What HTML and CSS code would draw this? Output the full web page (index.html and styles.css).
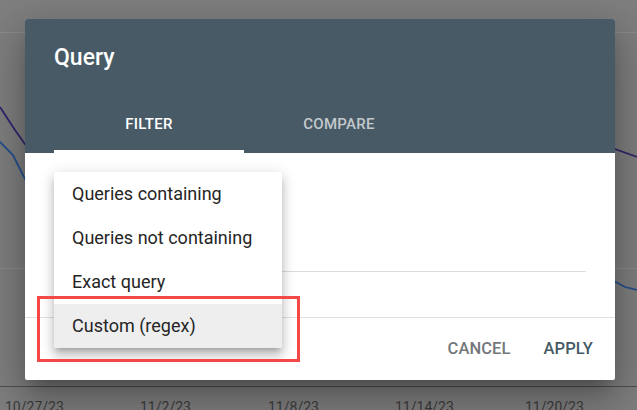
FILE: index.html
```html
<!DOCTYPE html>
<html lang="en">
<head>
<meta charset="utf-8">
<title>Query filter</title>
<link rel="stylesheet" href="styles.css">
</head>
<body>
<div class="page">
  <svg class="chart" width="637" height="410" viewBox="0 0 637 410" aria-hidden="true">
    <line x1="0" y1="32.5" x2="637" y2="32.5" class="grid"/>
    <line x1="0" y1="268.5" x2="637" y2="268.5" class="grid"/>
    <line x1="0" y1="386.5" x2="637" y2="386.5" class="axis"/>
    <polyline points="0,107 15,130 27,147" class="series-purple"/>
    <polyline points="0,142 13,155 27,183" class="series-blue"/>
    <polyline points="612,148 637,157" class="series-purple"/>
    <polyline points="612,280 625,287 637,290" class="series-blue"/>
    <text x="5" y="412" class="tick">10/27/23</text>
    <text x="140" y="412" class="tick">11/2/23</text>
    <text x="268" y="412" class="tick">11/8/23</text>
    <text x="395" y="412" class="tick">11/14/23</text>
    <text x="525" y="412" class="tick">11/20/23</text>
  </svg>

  <div class="dialog" role="dialog" aria-label="Query">
    <div class="dialog-header">
      <h2 class="dialog-title">Query</h2>
      <div class="tabs">
        <div class="tab tab-active">FILTER</div>
        <div class="tab">COMPARE</div>
      </div>
    </div>
    <div class="dialog-body">
      <div class="field"></div>
    </div>
    <div class="dialog-footer">
      <span class="btn btn-cancel">CANCEL</span>
      <span class="btn btn-apply">APPLY</span>
    </div>

    <ul class="menu">
      <li class="menu-item">Queries containing</li>
      <li class="menu-item">Queries not containing</li>
      <li class="menu-item">Exact query</li>
      <li class="menu-item menu-item-active">Custom (regex)</li>
    </ul>
  </div>

  <div class="highlight"></div>
</div>
</body>
</html>
```

FILE: styles.css
```css
* { box-sizing: border-box; }

html, body {
  margin: 0;
  padding: 0;
}

body {
  font-family: Roboto, "Liberation Sans", Arial, sans-serif;
  background: #808080;
}

.page {
  position: relative;
  width: 637px;
  height: 410px;
  overflow: hidden;
  background: #7f7f7f;
}

.chart {
  position: absolute;
  left: 0;
  top: 0;
}

.grid {
  stroke: #8b8b8b;
  stroke-width: 1;
}

.axis {
  stroke: #505050;
  stroke-width: 1.2;
}

.series-purple {
  fill: none;
  stroke: #35246e;
  stroke-width: 1.8;
}

.series-blue {
  fill: none;
  stroke: #24508f;
  stroke-width: 1.8;
}

.tick {
  font-family: Roboto, "Liberation Sans", Arial, sans-serif;
  font-size: 14px;
  fill: #3c3c3c;
}

.dialog {
  position: absolute;
  left: 25px;
  top: 19px;
  width: 590px;
  height: 361px;
  background: #ffffff;
  border-radius: 2px;
  display: flex;
  flex-direction: column;
  box-shadow: 0 11px 15px -7px rgba(0,0,0,.25),
              0 24px 38px 3px rgba(0,0,0,.16),
              0 9px 46px 8px rgba(0,0,0,.14);
}

.dialog-header {
  background: #475a66;
  border-radius: 2px 2px 0 0;
  padding: 25px 29px 0;
  height: 134px;
}

.dialog-title {
  margin: 0 0 33px;
  font-size: 23px;
  line-height: 28px;
  font-weight: 500;
  color: #ffffff;
}

.tabs {
  display: flex;
  height: 48px;
}

.tab {
  width: 190px;
  height: 48px;
  padding-top: 9px;
  text-align: center;
  font-size: 15px;
  line-height: 20px;
  font-weight: 500;
  letter-spacing: 0.3px;
  color: #c3c9cd;
}

.tab-active {
  color: #ffffff;
  border-bottom: 3px solid #ffffff;
}

.dialog-body {
  height: 164px;
  padding: 0 29px;
}

.field {
  height: 119px;
  border-bottom: 1px solid #dcdcdc;
}

.dialog-footer {
  flex: 1;
  border-top: 1px solid #e0e0e0;
  display: flex;
  justify-content: flex-end;
  align-items: flex-start;
  gap: 33px;
  padding: 21px 22px 0 0;
}

.btn {
  font-size: 16.5px;
  line-height: 20px;
  font-weight: 500;
  letter-spacing: 0.1px;
}

.btn-cancel { color: #73777a; }
.btn-apply { color: #455a64; }

.menu {
  position: absolute;
  left: 29px;
  top: 153px;
  width: 228px;
  margin: 0;
  padding: 0;
  list-style: none;
  background: #ffffff;
  border-radius: 2px;
  box-shadow: 0 5px 5px -3px rgba(0,0,0,.2),
              0 8px 10px 1px rgba(0,0,0,.14),
              0 3px 14px 2px rgba(0,0,0,.12);
}

.menu-item {
  height: 44px;
  line-height: 44px;
  padding-left: 18px;
  font-size: 18px;
  color: #252525;
}

.menu-item-active {
  background: #eeeeee;
}

.highlight {
  position: absolute;
  left: 37px;
  top: 296px;
  width: 263px;
  height: 66px;
  border: 3px solid #f24848;
}
```
